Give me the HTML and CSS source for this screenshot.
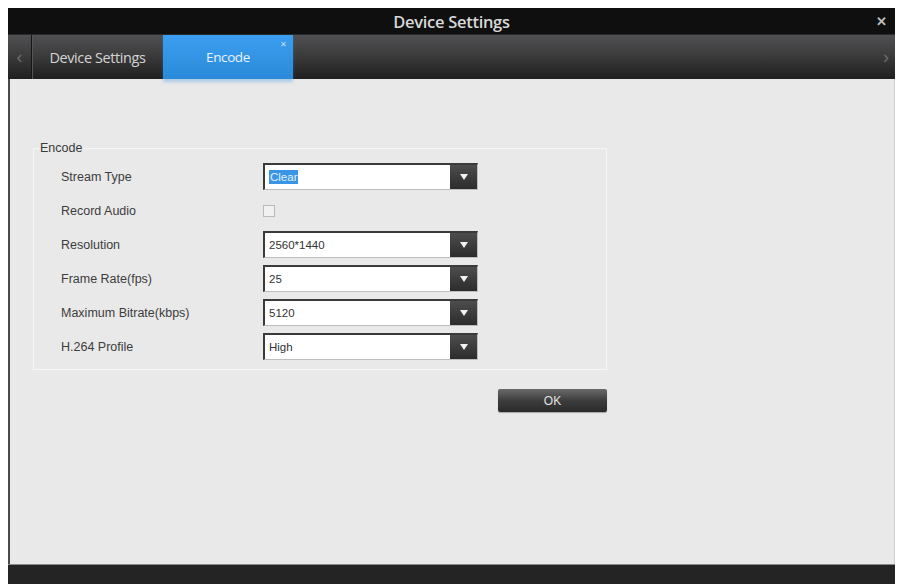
FILE: index.html
```html
<!DOCTYPE html>
<html lang="en">
<head>
  <meta charset="utf-8">
  <title>Device Settings</title>
  <link rel="stylesheet" href="styles.css">
</head>
<body>
  <div class="window">
    <header class="titlebar">
      <span></span>
      <h1>Device Settings</h1>
      <button class="close" aria-label="Close">&#x2715;</button>
    </header>

    <nav class="tabbar">
      <span class="arrow">&#x2039;</span>
      <span class="tab">Device Settings</span>
      <span class="tab active">Encode<i class="tab-close">&#x2715;</i></span>
      <span class="spacer"></span>
      <span class="arrow right">&#x203A;</span>
    </nav>

    <main class="content">
      <fieldset class="group">
        <legend>Encode</legend>
        <div class="rows">
          <label>Stream Type</label>
          <div class="select"><span class="value"><mark>Clear</mark></span><span class="drop"></span></div>

          <label>Record Audio</label>
          <div class="check-cell"><span class="check"></span></div>

          <label>Resolution</label>
          <div class="select"><span class="value">2560*1440</span><span class="drop"></span></div>

          <label>Frame Rate(fps)</label>
          <div class="select"><span class="value">25</span><span class="drop"></span></div>

          <label>Maximum Bitrate(kbps)</label>
          <div class="select"><span class="value">5120</span><span class="drop"></span></div>

          <label>H.264 Profile</label>
          <div class="select"><span class="value">High</span><span class="drop"></span></div>
        </div>
      </fieldset>

      <div class="actions">
        <button class="btn">OK</button>
      </div>
    </main>

    <footer class="statusbar"></footer>
  </div>
</body>
</html>
```

FILE: styles.css
```css
body {
  margin: 0;
  background: #fff;
  font-family: 'Liberation Sans', Arial, sans-serif;
}

.window {
  margin: 8px 4px 0 8px;
  height: 576px;
  display: flex;
  flex-direction: column;
}

.titlebar {
  height: 26px;
  background: #0f0f10;
  display: grid;
  grid-template-columns: 1fr auto 1fr;
  align-items: center;
}

.titlebar h1 {
  margin: 0;
  font-family: 'Open Sans', sans-serif;
  font-weight: 600;
  font-size: 16.5px;
  color: #d8d8d8;
  letter-spacing: -0.3px;
}

.close {
  justify-self: end;
  background: none;
  border: none;
  color: #bdbdbd;
  font-size: 13px;
  font-weight: bold;
  padding: 0 8px 0 0;
}

.tabbar {
  height: 45px;
  display: flex;
  background: linear-gradient(#505052, #3c3c3d 45%, #1f1f20);
  border-top: 1px solid #2a2a2a;
  box-sizing: border-box;
}

.arrow {
  width: 23px;
  display: flex;
  align-items: center;
  justify-content: center;
  color: #6c6c6c;
  font-size: 18px;
  border-right: 1px solid #151515;
  box-shadow: 1px 0 0 #555;
}

.arrow.right {
  border-right: none;
  box-shadow: none;
  width: 18px;
}

.tab {
  width: 131px;
  display: flex;
  align-items: center;
  justify-content: center;
  font-family: 'Open Sans', sans-serif;
  font-size: 14.5px;
  color: #d4d4d4;
  letter-spacing: -0.4px;
}

.tab.active {
  position: relative;
  width: 130px;
  background: linear-gradient(#3c9ef0, #2a8ad9);
  color: #e8f2fb;
  font-size: 13.5px;
  box-shadow: 0 3px 3px rgba(60, 150, 230, 0.35);
}

.tab-close {
  position: absolute;
  top: 3px;
  right: 6px;
  font-style: normal;
  font-size: 8px;
  color: #bfe0fb;
}

.spacer {
  flex: 1;
}

.content {
  flex: 1;
  background: #e9e9e9;
  border-left: 2px solid #4a4a4a;
  border-right: 1px solid #cfcfcf;
  padding: 61px 0 0 23px;
}

.group {
  width: 574px;
  box-sizing: border-box;
  margin: 0;
  padding: 7px 0 9px 27px;
  border: 1px solid #f6f6f6;
}

.group legend {
  margin-left: -21px;
  padding: 0;
  font-size: 12.5px;
  line-height: 16px;
  color: #3a3a3a;
}

.rows {
  display: grid;
  grid-template-columns: 202px 215px;
  grid-auto-rows: 27px;
  row-gap: 7px;
  align-items: center;
}

.rows label {
  font-size: 12.5px;
  color: #3c3c3c;
}

.select {
  height: 27px;
  display: flex;
  background: #fff;
  border: 1px solid #bdbdbd;
  border-top: 2px solid #3a3a3a;
  border-left: 2px solid #3a3a3a;
  box-sizing: border-box;
}

.value {
  flex: 1;
  display: flex;
  align-items: center;
  padding-left: 4px;
  font-size: 11.5px;
  color: #333;
}

.value mark {
  background: #3a95e6;
  color: #e6f1fc;
  padding: 1px 1px;
}

.drop {
  width: 27px;
  background: linear-gradient(#4d4d4d, #2c2c2c);
  display: flex;
  align-items: center;
  justify-content: center;
}

.drop::after {
  content: "";
  border-left: 4px solid transparent;
  border-right: 4px solid transparent;
  border-top: 6px solid #f2f2f2;
}

.check {
  display: block;
  width: 10px;
  height: 10px;
  border: 1px solid #b9b9b9;
  background: #f1f1f1;
}

.actions {
  width: 574px;
  display: flex;
  justify-content: flex-end;
  margin-top: 19px;
}

.btn {
  width: 109px;
  height: 23px;
  border: none;
  border-radius: 2px;
  background: linear-gradient(#6a6a6a, #3d3d3d 50%, #2a2a2a);
  color: #e2e2e2;
  font-family: 'Liberation Sans', Arial, sans-serif;
  font-size: 12px;
  box-shadow: 0 1px 1px rgba(0, 0, 0, 0.3);
}

.statusbar {
  height: 19px;
  background: #232423;
  border-top: 1px solid #888;
}
```
